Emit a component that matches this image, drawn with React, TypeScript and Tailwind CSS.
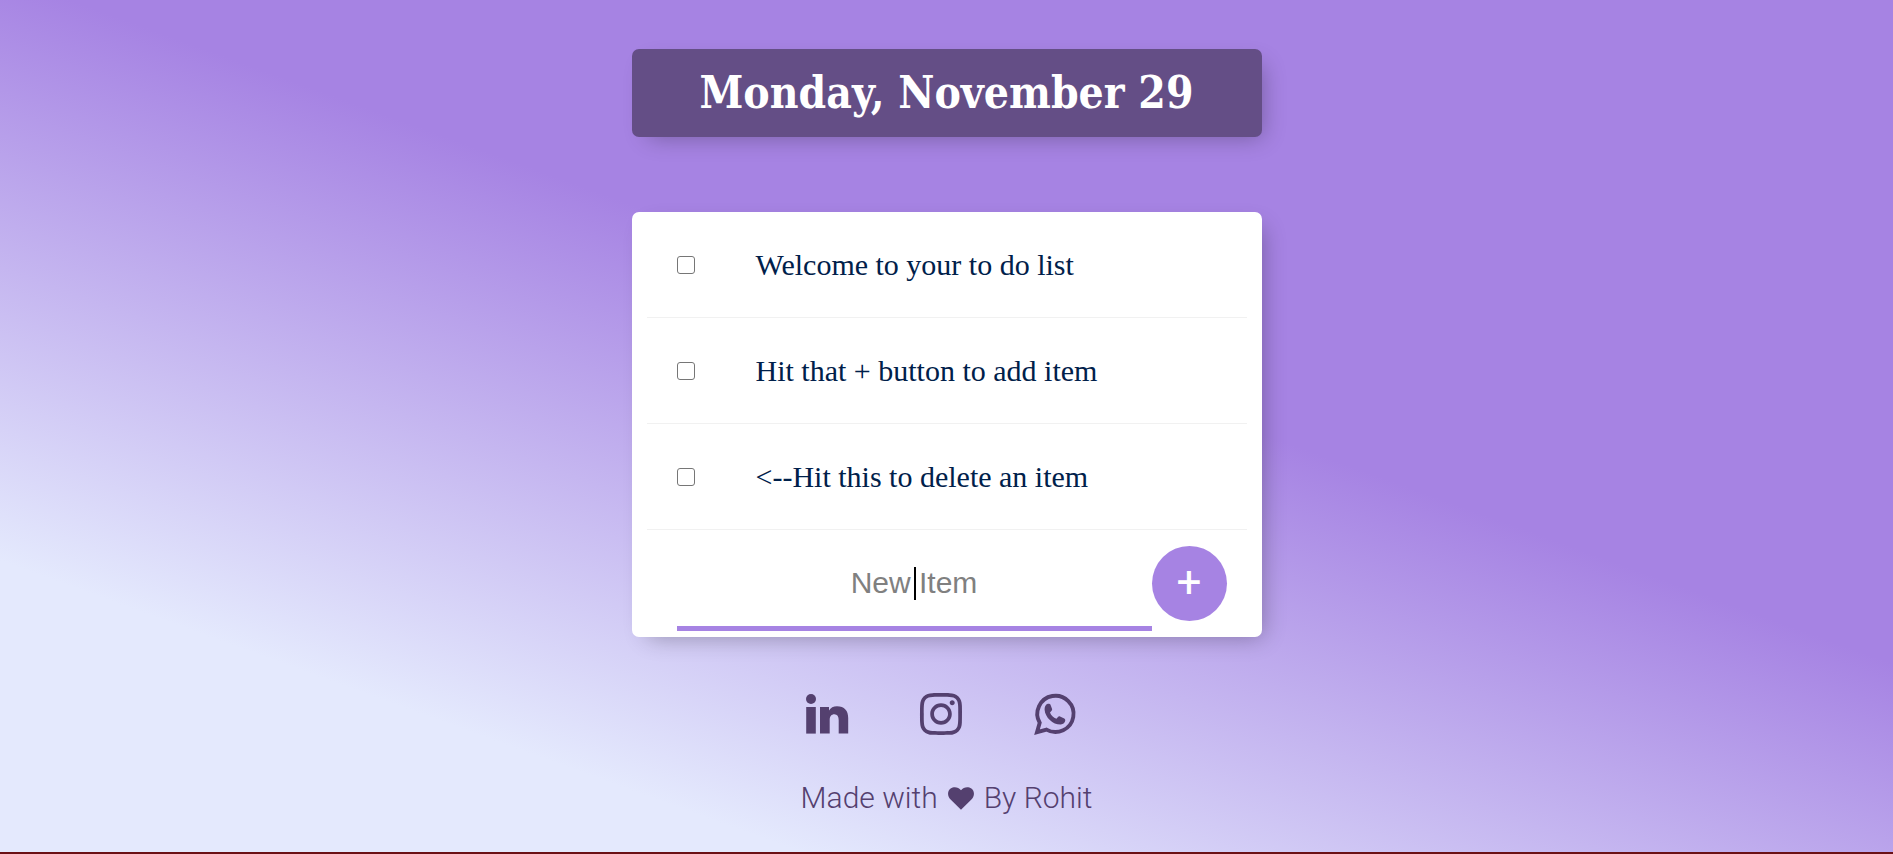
import { useState } from "react";
import { FaInstagram } from "react-icons/fa";

type IconProps = { className?: string };

function LinkedInIcon({ className }: IconProps) {
  return (
    <svg viewBox="0 0 48 48" className={className} fill="currentColor" aria-hidden="true">
      <circle cx="8" cy="9" r="5" />
      <path d="M3.2 17h9.6v26.6H3.2z" />
      <path d="M17 17h9v3.6c1.6-2.9 4.4-4.3 8-4.3 7.4 0 11.2 4.4 11.2 11.8v15.5h-9.5V30.2c0-4-1.4-6-4.3-6-3 0-4.7 2.1-4.7 5.6v13.8H17z" />
    </svg>
  );
}

function WhatsAppIcon({ className }: IconProps) {
  return (
    <svg viewBox="0 0 48 48" className={className} fill="currentColor" aria-hidden="true">
      <path
        d="M15.5 39.6 6 42.2l2.7-9.4A18.1 18.1 0 1 1 15.5 39.6z"
        fill="none"
        stroke="currentColor"
        strokeWidth="3.9"
      />
      <path d="M16.8 13.8c-2.2.6-3.4 3.2-3.2 5.9C14.2 27.6 22 34.8 29.8 34.6c2.5-.2 4.4-2.1 4.5-4.3 0-.8-.4-1.4-1-1.7L29 26.4c-.8-.3-1.5-.1-2 .5l-1.6 1.8c-2.8-.9-5.6-3.5-6.4-6.2l1.6-1.7c.6-.6.7-1.3.4-2l-1.5-4c-.4-1-1.6-1.3-2.7-1z" />
    </svg>
  );
}

function HeartIcon({ className }: IconProps) {
  return (
    <svg viewBox="0 0 26 23" className={className} fill="currentColor" aria-label="love" role="img">
      <path d="M13 22.8 2.6 12.6C-.9 9-.7 4 2.6 1.6 6-.9 10.5.2 13 3.2 15.5.2 20-.9 23.4 1.6c3.3 2.4 3.5 7.4 0 11z" />
    </svg>
  );
}

const startItems = [
  "Welcome to your to do list",
  "Hit that + button to add item",
  "<--Hit this to delete an item",
];

const links = [
  { name: "LinkedIn", href: "#linkedin", Icon: LinkedInIcon },
  { name: "Instagram", href: "#instagram", Icon: FaInstagram },
  { name: "WhatsApp", href: "#whatsapp", Icon: WhatsAppIcon },
];

export default function App() {
  const [items, setItems] = useState(startItems);
  const [draft, setDraft] = useState("");

  return (
    <div className="flex min-h-screen flex-col items-center border-b-2 border-[#6b1015] bg-[linear-gradient(20deg,#e4e9fd_19%,#a683e3_57%)] bg-origin-border px-4 pt-[49px]">
      <header className="w-full max-w-[630px] rounded-[7px] bg-[#644e86] py-3 text-center shadow-[8px_8px_22px_-8px_rgba(0,0,0,0.3)]">
        <h1 className="font-['DejaVu_Serif_Condensed','DejaVu_Serif',serif] text-[44px] leading-[64px] font-bold text-white">
          Monday, November 29
        </h1>
      </header>

      <main className="mt-[75px] w-full max-w-[630px] rounded-[7px] bg-white px-[15px] shadow-[8px_8px_22px_-8px_rgba(0,0,0,0.3)]">
        <ul>
          {items.map((item) => (
            <li key={item} className="border-b border-[#f1f1f1]">
              <label className="flex h-[105px] items-center gap-[61px] px-[30px]">
                <input
                  type="checkbox"
                  className="size-[18px] shrink-0 appearance-none rounded-[3px] border border-[#767676] bg-white"
                  onChange={() => setItems(items.filter((other) => other !== item))}
                />
                <span className="font-['Liberation_Serif',serif] text-[30px] leading-10 text-[#00204a]">{item}</span>
              </label>
            </li>
          ))}
        </ul>
        <form
          className="flex h-[107px] items-center pr-5 pl-[30px]"
          onSubmit={(event) => {
            event.preventDefault();
            if (draft) setItems([...items, draft]);
            setDraft("");
          }}
        >
          <div className="relative mt-1 h-[91px] w-full max-w-[475px]">
            <input
              type="text"
              aria-label="New item"
              placeholder="New Item"
              value={draft}
              onChange={(event) => setDraft(event.target.value)}
              className="h-full w-full border-b-[5px] border-[#a683e3] bg-transparent text-center font-['Liberation_Sans',sans-serif] text-[30px] text-[#00204a] caret-transparent outline-none placeholder:text-[#808080]"
            />
            <span className="absolute top-[27px] left-1/2 h-[33px] w-0.5 bg-black" />
          </div>
          <button
            type="submit"
            aria-label="Add item"
            className="size-[75px] shrink-0 rounded-full bg-[#a683e3] pb-1 text-center font-[Roboto,sans-serif] text-[44px] leading-none font-normal text-white"
          >
            +
          </button>
        </form>
      </main>

      <footer className="mt-[53px] flex flex-col items-center text-[#54406f]">
        <nav className="flex gap-[66px] pr-3">
          {links.map(({ name, href, Icon }) => (
            <a key={name} href={href} aria-label={name}>
              <Icon className="size-12" />
            </a>
          ))}
        </nav>
        <p className="mt-10 flex items-center gap-2.5 font-[Roboto,sans-serif] text-[30px] leading-10 font-light">
          Made with <HeartIcon className="w-[26px]" /> By Rohit
        </p>
      </footer>
    </div>
  );
}
